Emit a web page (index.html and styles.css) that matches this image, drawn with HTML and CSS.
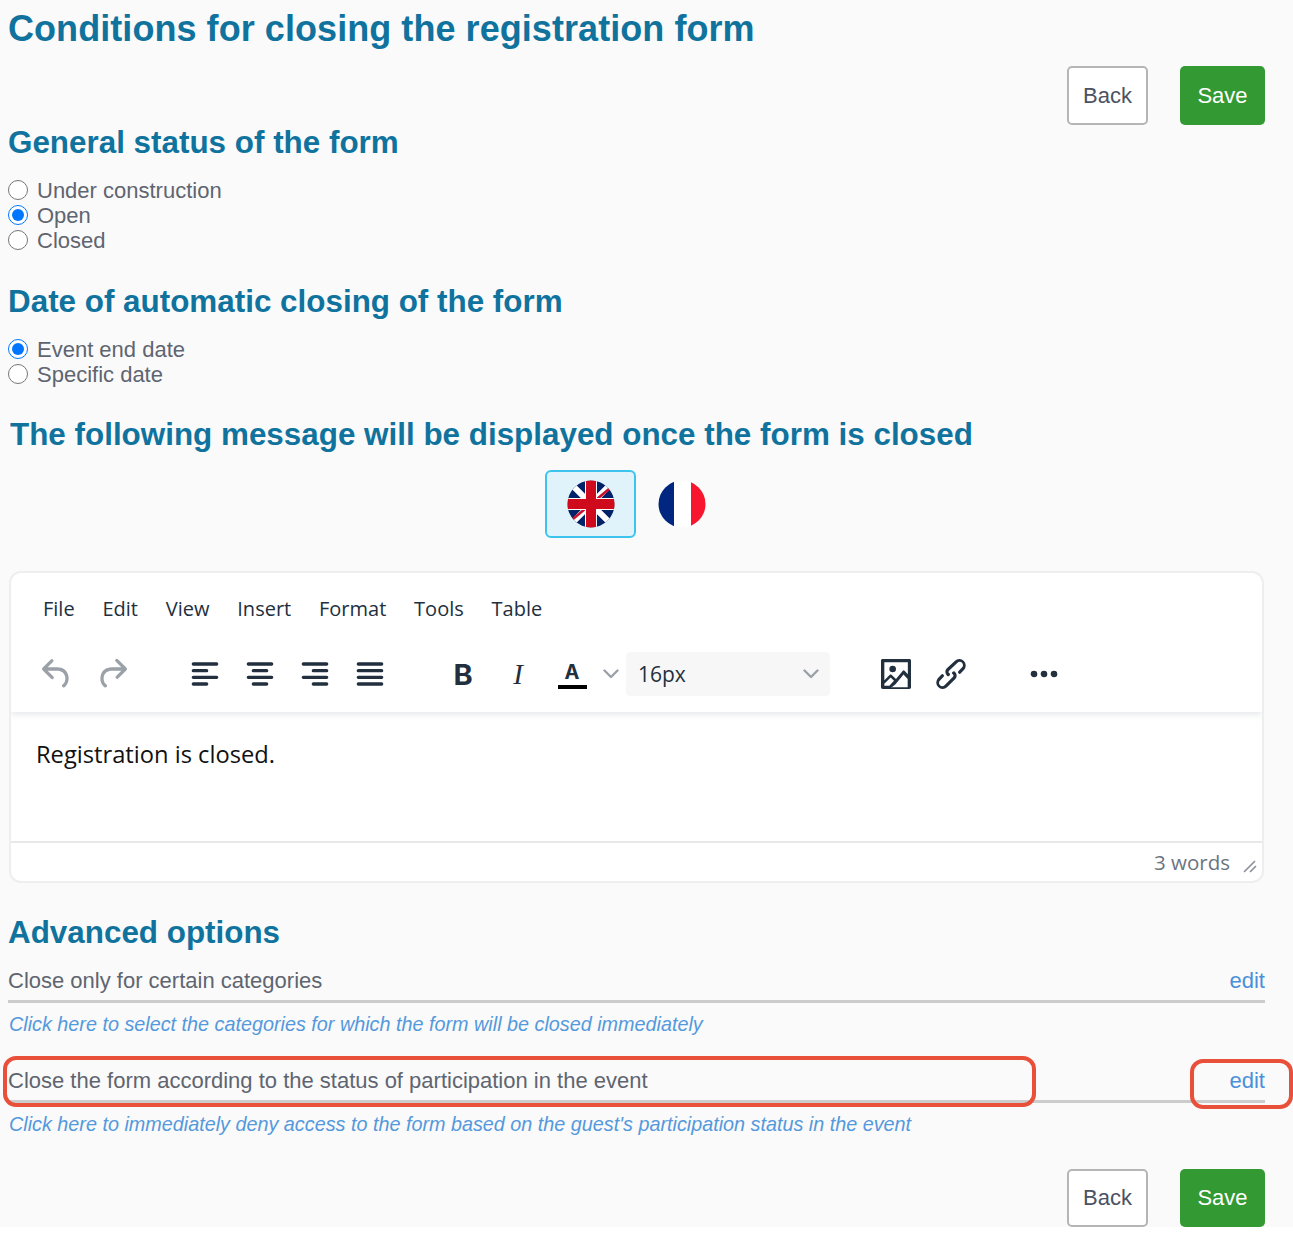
FILE: index.html
```html
<!DOCTYPE html>
<html lang="en">
<head>
<meta charset="utf-8">
<title>Conditions for closing the registration form</title>
<link rel="stylesheet" href="styles.css">
</head>
<body>
<main class="page">
  <h1 class="title">Conditions for closing the registration form</h1>
  <div class="actions actions-top">
    <button class="btn btn-back">Back</button>
    <button class="btn btn-save">Save</button>
  </div>

  <h2 class="heading heading-general">General status of the form</h2>
  <div class="radios">
    <label class="radio"><input type="radio" name="status"><span>Under construction</span></label>
    <label class="radio"><input type="radio" name="status" checked><span>Open</span></label>
    <label class="radio"><input type="radio" name="status"><span>Closed</span></label>
  </div>

  <h2 class="heading heading-date">Date of automatic closing of the form</h2>
  <div class="radios">
    <label class="radio"><input type="radio" name="date" checked><span>Event end date</span></label>
    <label class="radio"><input type="radio" name="date"><span>Specific date</span></label>
  </div>

  <h2 class="heading heading-message">The following message will be displayed once the form is closed</h2>
  <div class="langs">
    <button class="lang lang-active" aria-label="English">
      <svg width="48" height="48" viewBox="0 0 48 48"><defs><clipPath id="c1"><circle cx="24" cy="24" r="23.5"/></clipPath></defs>
        <g clip-path="url(#c1)"><rect width="48" height="48" fill="#012169"/>
        <path d="M0 0L48 48M48 0L0 48" stroke="#fff" stroke-width="6"/>
        <path d="M48 4L24 24M0 44L24 24" stroke="#c8102e" stroke-width="2.5"/>
        <path d="M24 0V48M0 24H48" stroke="#fff" stroke-width="12"/>
        <path d="M24 0V48M0 24H48" stroke="#cf0a1c" stroke-width="10"/></g>
      </svg>
    </button>
    <button class="lang" aria-label="Français">
      <svg width="48" height="48" viewBox="0 0 48 48"><defs><clipPath id="c2"><circle cx="24" cy="24" r="23.5"/></clipPath></defs>
        <g clip-path="url(#c2)"><rect width="16" height="48" fill="#00267f"/><rect x="16" width="17" height="48" fill="#fff"/><rect x="33" width="15" height="48" fill="#f7152f"/></g>
      </svg>
    </button>
  </div>

  <section class="editor">
    <div class="editor-head">
      <nav class="menubar">
        <span>File</span><span>Edit</span><span>View</span><span>Insert</span><span>Format</span><span>Tools</span><span>Table</span>
      </nav>
      <div class="toolbar">
        <div class="group">
          <span class="tool"><svg class="ico ico-off" viewBox="0 0 24 24"><path d="M6.4 8H12c3.7 0 6.2 2 6.8 5.1.6 2.7-.4 5.6-2.3 6.8a1 1 0 0 1-1-1.8c1.1-.6 1.8-2.7 1.4-4.6-.5-2.1-2.1-3.5-4.9-3.5H6.4l3.3 3.3a1 1 0 1 1-1.4 1.4l-5-5a1 1 0 0 1 0-1.4l5-5a1 1 0 0 1 1.4 1.4L6.4 8Z"/></svg></span>
          <span class="tool"><svg class="ico ico-off" viewBox="0 0 24 24"><path d="M17.6 10H12c-2.8 0-4.4 1.4-4.9 3.5-.4 2 .3 4 1.4 4.6a1 1 0 1 1-1 1.8c-2-1.2-2.9-4.1-2.3-6.8.6-3 3-5.1 6.8-5.1h5.6l-3.3-3.3a1 1 0 1 1 1.4-1.4l5 5a1 1 0 0 1 0 1.4l-5 5a1 1 0 0 1-1.4-1.4l3.3-3.3Z"/></svg></span>
        </div>
        <div class="group">
          <span class="tool"><svg class="ico" viewBox="0 0 24 24"><path d="M5 5h14a1 1 0 1 1 0 2H5a1 1 0 1 1 0-2Zm0 4h8a1 1 0 1 1 0 2H5a1 1 0 1 1 0-2Zm0 8h8a1 1 0 1 1 0 2H5a1 1 0 0 1 0-2Zm0-4h14a1 1 0 1 1 0 2H5a1 1 0 0 1 0-2Z"/></svg></span>
          <span class="tool"><svg class="ico" viewBox="0 0 24 24"><path d="M5 5h14a1 1 0 1 1 0 2H5a1 1 0 1 1 0-2Zm3 4h8a1 1 0 1 1 0 2H8a1 1 0 1 1 0-2Zm0 8h8a1 1 0 1 1 0 2H8a1 1 0 0 1 0-2Zm-3-4h14a1 1 0 1 1 0 2H5a1 1 0 0 1 0-2Z"/></svg></span>
          <span class="tool"><svg class="ico" viewBox="0 0 24 24"><path d="M5 5h14a1 1 0 1 1 0 2H5a1 1 0 1 1 0-2Zm6 4h8a1 1 0 0 1 0 2h-8a1 1 0 0 1 0-2Zm0 8h8a1 1 0 0 1 0 2h-8a1 1 0 0 1 0-2Zm-6-4h14a1 1 0 0 1 0 2H5a1 1 0 0 1 0-2Z"/></svg></span>
          <span class="tool"><svg class="ico" viewBox="0 0 24 24"><path d="M5 5h14a1 1 0 1 1 0 2H5a1 1 0 1 1 0-2Zm0 4h14a1 1 0 0 1 0 2H5a1 1 0 1 1 0-2Zm0 8h14a1 1 0 0 1 0 2H5a1 1 0 0 1 0-2Zm0-4h14a1 1 0 0 1 0 2H5a1 1 0 0 1 0-2Z"/></svg></span>
        </div>
        <div class="group">
          <span class="tool tool-text tool-b">B</span>
          <span class="tool tool-text tool-i">I</span>
          <span class="tool-color">
            <span class="color-a">A</span>
            <svg class="chev chev-color" viewBox="0 0 16 10"><path d="M1.5 1.5L8 8l6.5-6.5"/></svg>
          </span>
          <span class="select"><span>16px</span><svg class="chev" viewBox="0 0 16 10"><path d="M1.5 1.5L8 8l6.5-6.5"/></svg></span>
        </div>
        <div class="group">
          <span class="tool"><svg class="ico" viewBox="0 0 24 24"><path fill-rule="evenodd" d="m5 15.7 3.3-3.2c.3-.3.7-.3 1 0L12 15l4.1-5c.3-.4.8-.4 1 0l2 2.1V5H5v10.7ZM5 18V19h3l2.8-2.9-2-2L5 17.9Zm14-3-2.5-2.7-4.8 5.9-2.6 2-.1-.2H19v-5ZM4 3h16c.6 0 1 .4 1 1v16c0 .6-.4 1-1 1H4a1 1 0 0 1-1-1V4c0-.6.4-1 1-1Zm6 8a2 2 0 1 1 0-4 2 2 0 0 1 0 4Z"/></svg></span>
          <span class="tool"><svg class="ico" viewBox="0 0 24 24"><path d="M6.2 12.3a1 1 0 0 1 1.4 1.4l-2 2a2 2 0 1 0 2.8 2.8l4.8-4.8a1 1 0 0 0 0-1.4 1 1 0 1 1 1.4-1.3 2.9 2.9 0 0 1 0 4L9.6 20a3.9 3.9 0 0 1-5.5-5.5l2-2Zm11.6-.6a1 1 0 0 1-1.4-1.4l2-2a2 2 0 1 0-2.8-2.8L10.8 10a1 1 0 0 0 0 1.4 1 1 0 1 1-1.4 1.3 2.9 2.9 0 0 1 0-4L14.4 4a3.9 3.9 0 0 1 5.5 5.5l-2 2Z"/></svg></span>
        </div>
        <div class="group">
          <span class="tool"><svg class="ico" viewBox="0 0 24 24"><path d="M6 10a2 2 0 0 0-2 2c0 1.1.9 2 2 2a2 2 0 0 0 2-2 2 2 0 0 0-2-2Zm12 0a2 2 0 0 0-2 2c0 1.1.9 2 2 2a2 2 0 0 0 2-2 2 2 0 0 0-2-2Zm-6 0a2 2 0 0 0-2 2c0 1.1.9 2 2 2a2 2 0 0 0 2-2 2 2 0 0 0-2-2Z"/></svg></span>
        </div>
      </div>
    </div>
    <div class="editor-body">Registration is closed.</div>
    <div class="statusbar">
      <span>3 words</span>
      <svg class="grip" viewBox="0 0 14 14"><path d="M1 13L12 2M7 13L13 7"/></svg>
    </div>
  </section>

  <h2 class="heading heading-advanced">Advanced options</h2>
  <div class="option">
    <span>Close only for certain categories</span><a class="edit">edit</a>
  </div>
  <p class="hint">Click here to select the categories for which the form will be closed immediately</p>
  <div class="option option-second">
    <span>Close the form according to the status of participation in the event</span><a class="edit">edit</a>
    <i class="mark mark-label"></i>
    <i class="mark mark-edit"></i>
  </div>
  <p class="hint">Click here to immediately deny access to the form based on the guest's participation status in the event</p>

  <div class="actions actions-bottom">
    <button class="btn btn-back">Back</button>
    <button class="btn btn-save">Save</button>
  </div>
</main>
</body>
</html>
```
FILE: styles.css
```css
* { box-sizing: border-box; }
html, body { margin: 0; background: #fff; }
body { font-family: "Liberation Sans", Arial, sans-serif; color: #5f6368; }
.page {
  width: 1293px;
  height: 1227px;
  background: #fafafa;
  padding: 0 28px 0 8px;
  overflow: hidden;
}
.title {
  margin: 0;
  padding-top: 8px;
  font-size: 36px;
  letter-spacing: .06px;
  line-height: 41px;
  font-weight: 700;
  color: #10739e;
}
.actions { display: flex; justify-content: flex-end; gap: 32px; }
.actions-top { margin-top: 17px; }
.actions-bottom { margin-top: 32px; }
.btn {
  font-family: "Liberation Sans", Arial, sans-serif;
  font-size: 22px;
  border-radius: 5px;
  height: 59px;
  padding: 0;
  cursor: pointer;
}
.actions-bottom .btn { height: 58px; }
.btn-back { width: 81px; background: #fff; border: 2px solid #b5b5b5; color: #4a5263; }
.btn-save { width: 85px; background: #339933; border: 0; color: #fff; }
.heading {
  margin: 0;
  font-size: 31.4px;
  line-height: 38px;
  font-weight: 700;
  color: #10739e;
}
.heading-general { margin-top: -1px; }
.heading-date { margin-top: 29px; }
.heading-message { margin-top: 29px; padding-left: 2px; }
.heading-advanced { margin-top: 31px; }
.radios { margin-top: 16px; display: flex; flex-direction: column; }
.radio { display: flex; align-items: center; gap: 9px; height: 25.3px; font-size: 22px; color: #5f6570; }
.radio input { width: 20px; height: 20px; margin: -2px 0 0; flex: none; }
.langs { display: flex; justify-content: center; margin-top: 16px; margin-left: 1px; padding-right: 2px; height: 68px; }
.lang {
  width: 91px;
  height: 68px;
  padding: 0;
  display: flex;
  align-items: center;
  justify-content: center;
  background: transparent;
  border: 2px solid transparent;
  border-radius: 6px;
}
.lang-active { background: #e0f3fa; border-color: #3cc4ee; }
.editor {
  margin-top: 33px;
  margin-left: 1px;
  width: 1255px;
  height: 312px;
  background: #fff;
  border: 2px solid #eeeeee;
  border-radius: 12px;
  display: flex;
  flex-direction: column;
  overflow: hidden;
  font-family: "Open Sans", sans-serif;
}
.editor-head {
  height: 139px;
  box-shadow: 0 3px 6px rgba(34, 47, 62, .1);
  position: relative;
}
.menubar {
  display: flex;
  gap: 27.8px;
  padding: 22px 0 0 32px;
  height: 79px;
  font-size: 20px;
  line-height: 27px;
  color: #222f3e;
}
.toolbar { display: flex; gap: 38px; padding-left: 18.5px; height: 44px; align-items: center; }
.group { display: flex; align-items: center; }
.tool { width: 55px; height: 44px; display: flex; align-items: center; justify-content: center; }
.ico { width: 40px; height: 40px; fill: #222f3e; flex: none; }
.ico-off { fill: #9aa1a8; }
.tool-text { color: #222f3e; font-size: 29px; }
.tool-b { font-family: "Inter", sans-serif; font-weight: 700; }
.tool-i { font-family: "Liberation Serif", serif; font-style: italic; }
.tool-color { width: 80.5px; height: 44px; position: relative; display: flex; align-items: center; }
.color-a {
  width: 29px;
  margin-left: 12px;
  text-align: center;
  font-family: "Inter", sans-serif;
  font-size: 20px;
  line-height: 26px;
  font-weight: 700;
  color: #222f3e;
  border-bottom: 4px solid #000;
}
.chev { width: 16px; height: 10px; flex: none; }
.chev path { fill: none; stroke: #9aa1a8; stroke-width: 2.4; stroke-linecap: round; stroke-linejoin: round; }
.chev-color { margin-left: 16px; }
.select {
  width: 204px;
  height: 44px;
  background: #f7f7f7;
  border-radius: 4px;
  display: flex;
  align-items: center;
  justify-content: space-between;
  padding: 0 11px 0 12px;
  font-size: 21px;
  color: #222f3e;
}
.editor-body {
  flex: 1;
  padding: 26px 0 0 25px;
  font-size: 23.7px;
  line-height: 32px;
  color: #111;
}
.statusbar {
  height: 40px;
  border-top: 2px solid #e8e8e8;
  display: flex;
  justify-content: flex-end;
  align-items: center;
  gap: 13px;
  padding-right: 5px;
  font-size: 20.5px;
  color: #6b7480;
}
.grip { width: 14px; height: 14px; margin-top: 8px; }
.grip path { fill: none; stroke: #8a9099; stroke-width: 1.6; }
.option {
  position: relative;
  margin-top: 9px;
  height: 42px;
  display: flex;
  justify-content: space-between;
  align-items: center;
  border-bottom: 3px solid #cccccc;
  font-size: 22px;
  color: #5f6570;
}
.option-second { margin-top: 24px; }
.edit { color: #4a90d9; }
.hint {
  margin: 9px 0 0;
  padding-left: 1px;
  font-size: 19.8px;
  line-height: 25px;
  font-style: italic;
  color: #5499dc;
}
.mark {
  position: absolute;
  border: 4px solid #e8503a;
  border-radius: 13px;
  pointer-events: none;
}
.mark-label { left: -5px; top: -5px; width: 1033px; height: 51px; }
.mark-edit { right: -28px; top: -2px; width: 103px; height: 50px; }
```
